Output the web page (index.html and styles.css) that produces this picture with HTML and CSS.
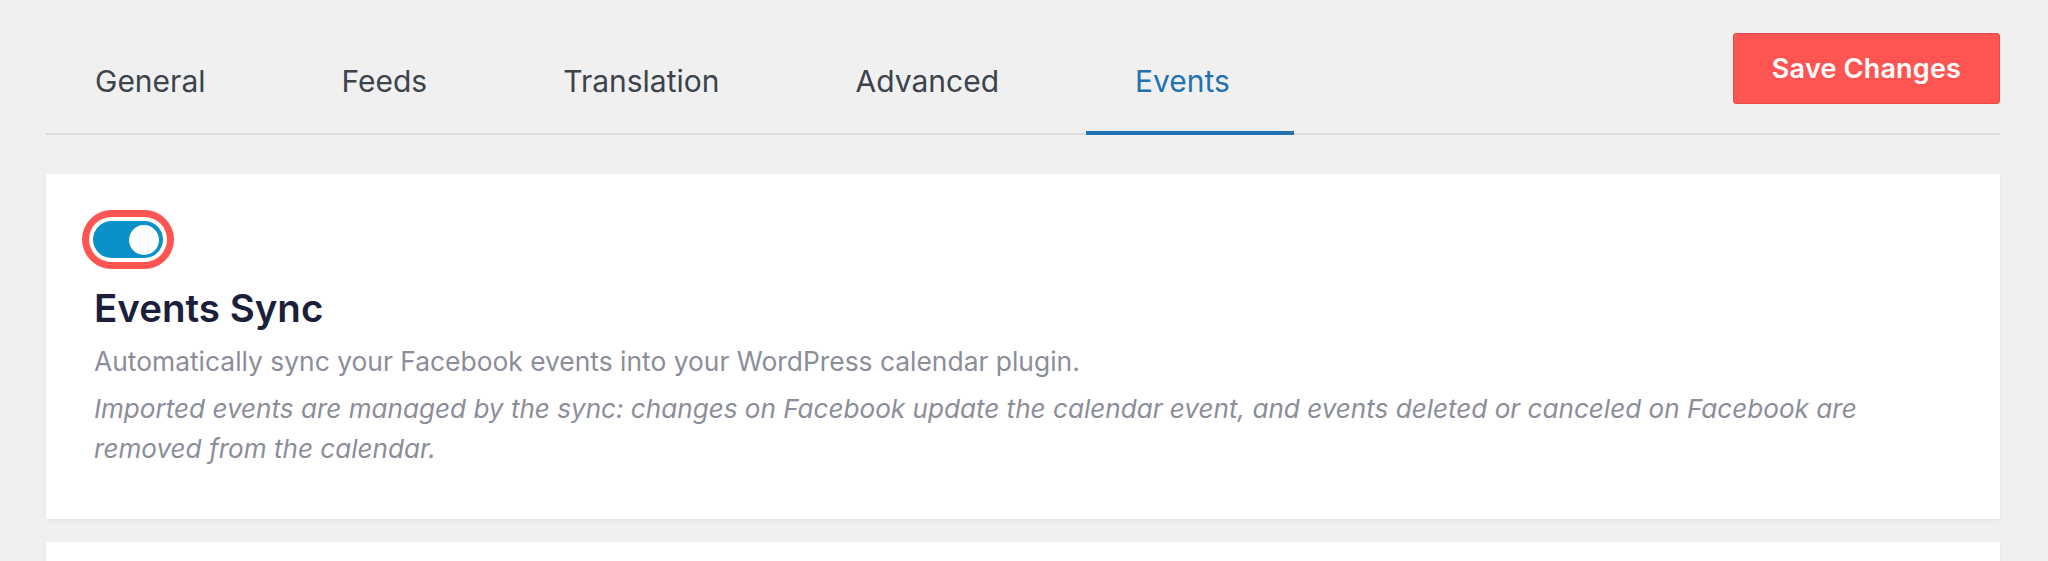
FILE: index.html
```html
<!DOCTYPE html>
<html lang="en">
<head>
<meta charset="utf-8">
<title>Events Settings</title>
<link rel="stylesheet" href="styles.css">
</head>
<body>
<div class="page">
  <header class="topbar">
    <nav class="tabs">
      <a class="tab">General</a>
      <a class="tab">Feeds</a>
      <a class="tab">Translation</a>
      <a class="tab">Advanced</a>
      <a class="tab active">Events</a>
    </nav>
    <button class="save-btn" type="button">Save Changes</button>
  </header>

  <section class="card">
    <div class="toggle focused" role="switch" aria-checked="true">
      <span class="knob"></span>
    </div>
    <h2 class="card-title">Events Sync</h2>
    <p class="desc">Automatically sync your Facebook events into your WordPress calendar plugin.</p>
    <p class="desc note">Imported events are managed by the sync: changes on Facebook update the calendar event, and events deleted or canceled on Facebook are removed from the calendar.</p>
  </section>

  <section class="card card-next"></section>
</div>
</body>
</html>
```

FILE: styles.css
```css
* { box-sizing: border-box; }

html, body {
  margin: 0;
  padding: 0;
  background: #f0f0f1;
  font-family: Inter, "Noto Sans", "Liberation Sans", sans-serif;
  overflow: hidden;
}

.page {
  padding: 0 48px 0 46px;
}

.topbar {
  display: flex;
  justify-content: space-between;
  align-items: flex-start;
  border-bottom: 2px solid #dcdcde;
  height: 135px;
}

.tabs {
  display: flex;
  align-items: flex-end;
  gap: 37px;
  height: 133px;
}

.tab {
  display: block;
  padding: 64px 50px 0 49px;
  height: 133px;
  line-height: 1;
  font-size: 30px;
  color: #3c434a;
  border-bottom: 4px solid transparent;
  margin-bottom: -2px;
  cursor: pointer;
}

.tab.active {
  color: #2271b1;
  border-bottom-color: #2271b1;
  padding-right: 64px;
}

.save-btn {
  margin-top: 33px;
  width: 267px;
  height: 71px;
  background: #ff5552;
  border: 1px solid #e54b48;
  border-radius: 3px;
  color: #fff;
  font-family: Inter, "Noto Sans", "Liberation Sans", sans-serif;
  font-size: 27px;
  font-weight: 600;
  letter-spacing: 0.2px;
  cursor: pointer;
}

.card {
  background: #fff;
  margin-top: 39px;
  padding: 47px 48px 50px 48px;
  box-shadow: 0 2px 6px rgba(0, 0, 0, 0.06);
}

.toggle {
  position: relative;
  width: 70px;
  height: 37px;
  border-radius: 19px;
  background: #0a91c9;
  margin-left: -1px;
}

.toggle.focused {
  box-shadow: 0 0 0 4px #fff, 0 0 0 11px #ff5552;
}

.knob {
  position: absolute;
  right: 4px;
  top: 3.5px;
  width: 30px;
  height: 30px;
  border-radius: 50%;
  background: #fff;
}

.card-title {
  margin: 27px 0 0 0;
  font-size: 38.5px;
  line-height: 46px;
  font-weight: 600;
  color: #1c1f3a;
}

.desc {
  margin: 10px 0 0 0;
  font-size: 26.4px;
  line-height: 40px;
  color: #8b8e9a;
}

.desc.note {
  margin-top: 8px;
  font-size: 26.1px;
  font-style: italic;
}

.card-next {
  margin-top: 23px;
  height: 22px;
  padding: 0;
}
```
